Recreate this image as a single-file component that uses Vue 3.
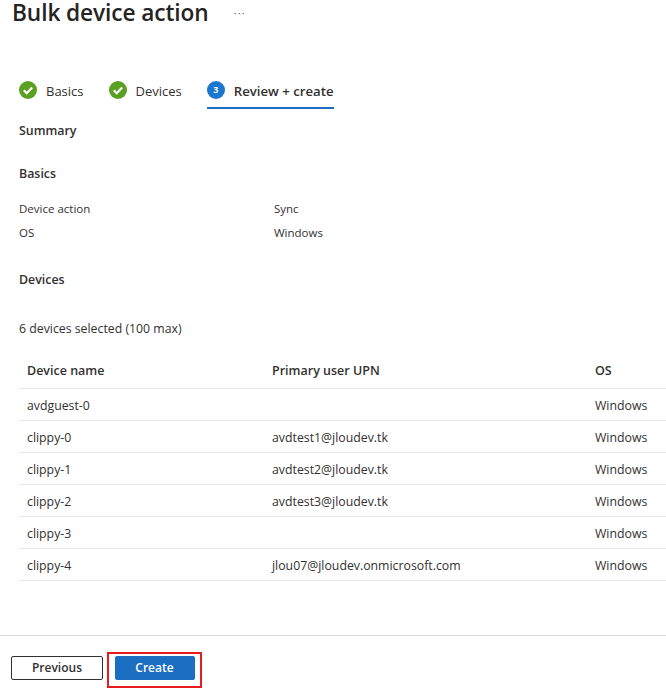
<script setup>
const rows = [
  ['avdguest-0', '', 'Windows'],
  ['clippy-0', 'avdtest1@jloudev.tk', 'Windows'],
  ['clippy-1', 'avdtest2@jloudev.tk', 'Windows'],
  ['clippy-2', 'avdtest3@jloudev.tk', 'Windows'],
  ['clippy-3', '', 'Windows'],
  ['clippy-4', 'jlou07@jloudev.onmicrosoft.com', 'Windows'],
]
</script>

<template>
  <div class="page">
    <header class="head">
      <h1>Bulk device action</h1>
      <span class="more">···</span>
    </header>
    <nav class="steps">
      <div class="step">
        <svg class="ico" viewBox="0 0 18 18"><circle cx="9" cy="9" r="9" fill="#5aa022"/><path d="M4.8 9.3l2.9 2.9 5.5-5.6" fill="none" stroke="#fff" stroke-width="2.2"/></svg>
        <span>Basics</span>
      </div>
      <div class="step">
        <svg class="ico" viewBox="0 0 18 18"><circle cx="9" cy="9" r="9" fill="#5aa022"/><path d="M4.8 9.3l2.9 2.9 5.5-5.6" fill="none" stroke="#fff" stroke-width="2.2"/></svg>
        <span>Devices</span>
      </div>
      <div class="step active">
        <span class="num">3</span>
        <span>Review + create</span>
      </div>
    </nav>
    <main class="content">
      <div class="h sum">Summary</div>
      <div class="h basics">Basics</div>
      <div class="kv"><span>Device action</span><span>Sync</span></div>
      <div class="kv"><span>OS</span><span>Windows</span></div>
      <div class="h devices">Devices</div>
      <div class="count">6 devices selected (100 max)</div>
      <div class="table">
        <div class="row th"><span>Device name</span><span>Primary user UPN</span><span>OS</span></div>
        <div class="row" v-for="r in rows" :key="r[0]">
          <span>{{ r[0] }}</span><span>{{ r[1] }}</span><span>{{ r[2] }}</span>
        </div>
      </div>
    </main>
    <footer class="foot">
      <button class="btn prev">Previous</button>
      <div class="mark"><button class="btn create">Create</button></div>
    </footer>
  </div>
</template>

<style>
html, body { margin: 0; background: #fff; }
</style>

<style scoped>
.page {
  width: 666px;
  height: 688px;
  overflow: hidden;
  display: flex;
  flex-direction: column;
  font-family: "Open Sans", "Noto Sans", sans-serif;
  font-size: 12.3px;
  color: #323130;
  background: #fff;
}
.head { display: flex; align-items: center; height: 26px; padding-left: 12px; }
h1 { margin: 0; font-size: 22.7px; line-height: 26px; font-weight: 600; color: #252423; letter-spacing: -0.1px; }
.more { margin-left: 25px; font-size: 11px; color: #605e5c; line-height: 26px; letter-spacing: 1.2px; }
.steps { display: flex; margin: 52px 0 0 19px; height: 31px; gap: 25px; }
.step { display: flex; align-items: flex-start; gap: 9px; font-size: 13px; padding-top: 3px; box-sizing: border-box; line-height: 20px; }
.ico { width: 18px; height: 18px; }
.num { width: 18px; height: 18px; border-radius: 50%; background: #1b76cf; color: #fff; font-size: 9px; font-weight: 700; line-height: 18px; text-align: center; }
.active { font-weight: 600; font-size: 13.2px; border-bottom: 2px solid #1b6ec2; }
.content { flex: 1; padding-left: 19px; }
.h { font-size: 12.4px; font-weight: 600; line-height: 18px; }
.sum { margin-top: 13px; }
.basics { margin-top: 25px; }
.kv { display: flex; line-height: 23px; font-size: 11.5px; }
.kv span:first-child { width: 255px; }
.basics + .kv { margin-top: 14px; }
.kv + .kv { margin-top: 1px; }
.devices { margin-top: 27px; }
.count { margin-top: 31px; line-height: 18px; }
.table { margin-top: 16px; }
.row { display: flex; height: 32px; align-items: center; border-bottom: 1px solid #edebe9; box-sizing: border-box; padding: 2px 0 0 8px; }
.th { height: 35px; padding: 0 0 1px 8px; font-weight: 600; font-size: 12.5px; }
.row span:nth-child(1) { width: 245px; }
.row span:nth-child(2) { width: 323px; }
.row span:nth-child(3) { white-space: nowrap; }
.foot { height: 53px; box-sizing: border-box; border-top: 1px solid #dcdcdc; display: flex; align-items: flex-start; padding: 16px 0 0 11px; gap: 4px; }
.btn { font-family: inherit; font-size: 12px; font-weight: 600; height: 24px; border-radius: 2px; box-sizing: border-box; padding: 0 0 2px; }
.prev { width: 92px; margin-top: 4px; background: #fff; border: 1px solid #323130; color: #323130; }
.mark { border: 2px solid #e81c1c; width: 95px; height: 36px; box-sizing: border-box; padding-top: 2px; display: flex; align-items: flex-start; justify-content: center; }
.create { width: 80px; background: #1b6ec2; border: 0; color: #fff; }
</style>
